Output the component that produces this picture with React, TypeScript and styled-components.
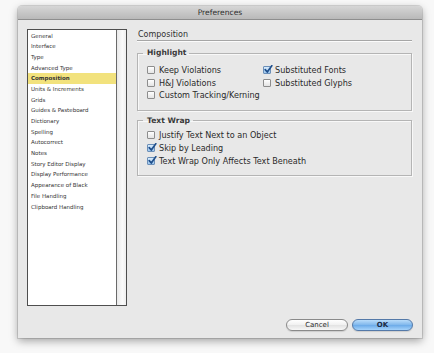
import styled, { createGlobalStyle } from 'styled-components';

const GlobalStyle = createGlobalStyle`
    html, body {
        margin: 0;
        padding: 0;
        background: #f8f8f8;
        font-family: 'DejaVu Sans', 'Liberation Sans', sans-serif;
        color: #222;
    }
`;

const StyledPage = styled.div`
    padding: 6px 12px 15px 18px;
    width: 434px;
    height: 353px;
    box-sizing: border-box;
    overflow: hidden;
`;

const StyledWindow = styled.div`
    width: 404px;
    height: 332px;
    display: flex;
    flex-direction: column;
    background: #e8e8e8;
    border-radius: 4px 4px 0 0;
    box-shadow: 0 3px 9px rgba(0, 0, 0, 0.35), 0 0 0 1px rgba(0, 0, 0, 0.12);
    overflow: hidden;
`;

const StyledTitleBar = styled.div`
    height: 14px;
    flex: none;
    display: flex;
    align-items: center;
    justify-content: center;
    background: linear-gradient(#d6d6d6, #b9b9b9);
    border-bottom: 1px solid #8e8e8e;
    box-sizing: border-box;
    font-size: 7.6px;
    color: #2e2e2e;
`;

const StyledContent = styled.div`
    flex: 1;
    display: flex;
    padding: 9px 10px 0 9px;
    min-height: 0;
`;

const StyledList = styled.div`
    width: 100px;
    height: 277px;
    flex: none;
    display: flex;
    background: #fff;
    border: 1px solid #4e4e4e;
    box-sizing: border-box;
`;

const StyledItems = styled.ul`
    flex: 1;
    margin: 0;
    padding: 0.5px 0 0;
    list-style: none;
`;

interface StyledItemProps {
    $selected: boolean;
}

const StyledItem = styled.li<StyledItemProps>`
    height: 10.7px;
    line-height: 10.7px;
    padding-left: 3px;
    font-size: 5.5px;
    color: #333;
    font-weight: ${props => (props.$selected ? 'bold' : 'normal')};
    background: ${props => (props.$selected ? '#f2e27d' : 'transparent')};
    white-space: nowrap;
`;

const StyledScrollTrack = styled.div`
    width: 9px;
    flex: none;
    background: linear-gradient(90deg, #e9e9e9, #fbfbfb 60%, #efefef);
    border-left: 1px solid #6a6a6a;
`;

const StyledPanel = styled.div`
    margin-left: 10px;
    width: 275px;
    display: flex;
    flex-direction: column;
`;

const StyledHeading = styled.div`
    height: 12px;
    line-height: 11px;
    padding-left: 1px;
    font-size: 8px;
    color: #303030;
    border-bottom: 1px solid #a6a6a6;
    box-shadow: 0 1px 0 #fbfbfb;
    box-sizing: border-box;
`;

interface StyledGroupProps {
    $top: number;
    $padTop: number;
    $padBottom: number;
}

const StyledGroup = styled.fieldset<StyledGroupProps>`
    margin: ${props => props.$top}px 0 0;
    padding: ${props => props.$padTop}px 0 ${props => props.$padBottom}px 9px;
    border: 1px solid #b4b4b4;
    box-shadow: inset 1px 1px 0 #f8f8f8, 1px 1px 0 #f8f8f8;
    min-width: 0;
`;

const StyledLegend = styled.legend`
    margin-left: -4px;
    padding: 0 3px 0 4px;
    height: 12px;
    line-height: 12px;
    font-size: 7.6px;
    font-weight: bold;
    color: #3a3a3a;
`;

interface StyledRowsProps {
    $rowHeight: number;
    $columns: string;
}

const StyledRows = styled.div<StyledRowsProps>`
    display: grid;
    grid-template-columns: ${props => props.$columns};
    grid-auto-flow: column;
    grid-template-rows: repeat(3, ${props => props.$rowHeight}px);
`;

const StyledCheckRow = styled.label`
    display: flex;
    align-items: center;
    gap: 4px;
    font-size: 8.1px;
    color: #2a2a2a;
    white-space: nowrap;
`;

const StyledBox = styled.span`
    width: 8px;
    height: 8px;
    flex: none;
    position: relative;
    box-sizing: border-box;
    border: 1px solid #8d8d8d;
    border-radius: 1px;
    background: linear-gradient(#ffffff, #e4e4e4);
`;

const StyledCheckedBox = styled(StyledBox)`
    border-color: #6b8fb8;
    background: linear-gradient(#d8ebfb, #9cc6ee);

    svg {
        position: absolute;
        left: 0;
        top: -2px;
    }
`;

const StyledFooter = styled.div`
    display: flex;
    justify-content: flex-end;
    gap: 4px;
    padding: 13px 9px 7px 0;
`;

interface StyledButtonProps {
    $primary?: boolean;
}

const StyledButton = styled.button<StyledButtonProps>`
    width: ${props => (props.$primary ? 61 : 62)}px;
    height: 12px;
    padding: 0;
    border-radius: 6px;
    font-family: inherit;
    font-size: 7px;
    font-weight: ${props => (props.$primary ? 'bold' : 'normal')};
    color: ${props => (props.$primary ? '#1d2c45' : '#2b2b2b')};
    border: 1px solid ${props => (props.$primary ? '#5479a8' : '#8a8a8a')};
    background: ${props =>
        props.$primary
            ? 'linear-gradient(#b9dcfa, #7fb7ec 50%, #6aaae8 51%, #a6d3fb)'
            : 'linear-gradient(#ffffff, #f0f0f0 50%, #e2e2e2 51%, #f7f7f7)'};
    box-shadow: 0 1px 1px rgba(0, 0, 0, 0.12);
`;

const sections = [
    'General',
    'Interface',
    'Type',
    'Advanced Type',
    'Composition',
    'Units & Increments',
    'Grids',
    'Guides & Pasteboard',
    'Dictionary',
    'Spelling',
    'Autocorrect',
    'Notes',
    'Story Editor Display',
    'Display Performance',
    'Appearance of Black',
    'File Handling',
    'Clipboard Handling',
];

function Check({ label, checked }: { label: string; checked?: boolean }) {
    return (
        <StyledCheckRow>
            {checked ? (
                <StyledCheckedBox>
                    <svg width='9' height='9' viewBox='0 0 9 9'>
                        <path d='M1.2 4.6 L3.3 7 L7.8 0.8' fill='none' stroke='#1f4f8c' strokeWidth='1.7' strokeLinecap='round' strokeLinejoin='round' />
                    </svg>
                </StyledCheckedBox>
            ) : (
                <StyledBox />
            )}
            {label}
        </StyledCheckRow>
    );
}

export default function App() {
    return (
        <StyledPage>
            <GlobalStyle />
            <StyledWindow>
                <StyledTitleBar>Preferences</StyledTitleBar>
                <StyledContent>
                    <StyledList>
                        <StyledItems>
                            {sections.map(name => (
                                <StyledItem key={name} $selected={name === 'Composition'}>
                                    {name}
                                </StyledItem>
                            ))}
                        </StyledItems>
                        <StyledScrollTrack />
                    </StyledList>
                    <StyledPanel>
                        <StyledHeading>Composition</StyledHeading>
                        <StyledGroup $top={6} $padTop={5} $padBottom={8}>
                            <StyledLegend>Highlight</StyledLegend>
                            <StyledRows $rowHeight={12.5} $columns='116px 1fr'>
                                <Check label='Keep Violations' />
                                <Check label='H&J Violations' />
                                <Check label='Custom Tracking/Kerning' />
                                <Check label='Substituted Fonts' checked />
                                <Check label='Substituted Glyphs' />
                            </StyledRows>
                        </StyledGroup>
                        <StyledGroup $top={4} $padTop={2} $padBottom={7}>
                            <StyledLegend>Text Wrap</StyledLegend>
                            <StyledRows $rowHeight={13} $columns='1fr'>
                                <Check label='Justify Text Next to an Object' />
                                <Check label='Skip by Leading' checked />
                                <Check label='Text Wrap Only Affects Text Beneath' checked />
                            </StyledRows>
                        </StyledGroup>
                    </StyledPanel>
                </StyledContent>
                <StyledFooter>
                    <StyledButton>Cancel</StyledButton>
                    <StyledButton $primary>OK</StyledButton>
                </StyledFooter>
            </StyledWindow>
        </StyledPage>
    );
}
